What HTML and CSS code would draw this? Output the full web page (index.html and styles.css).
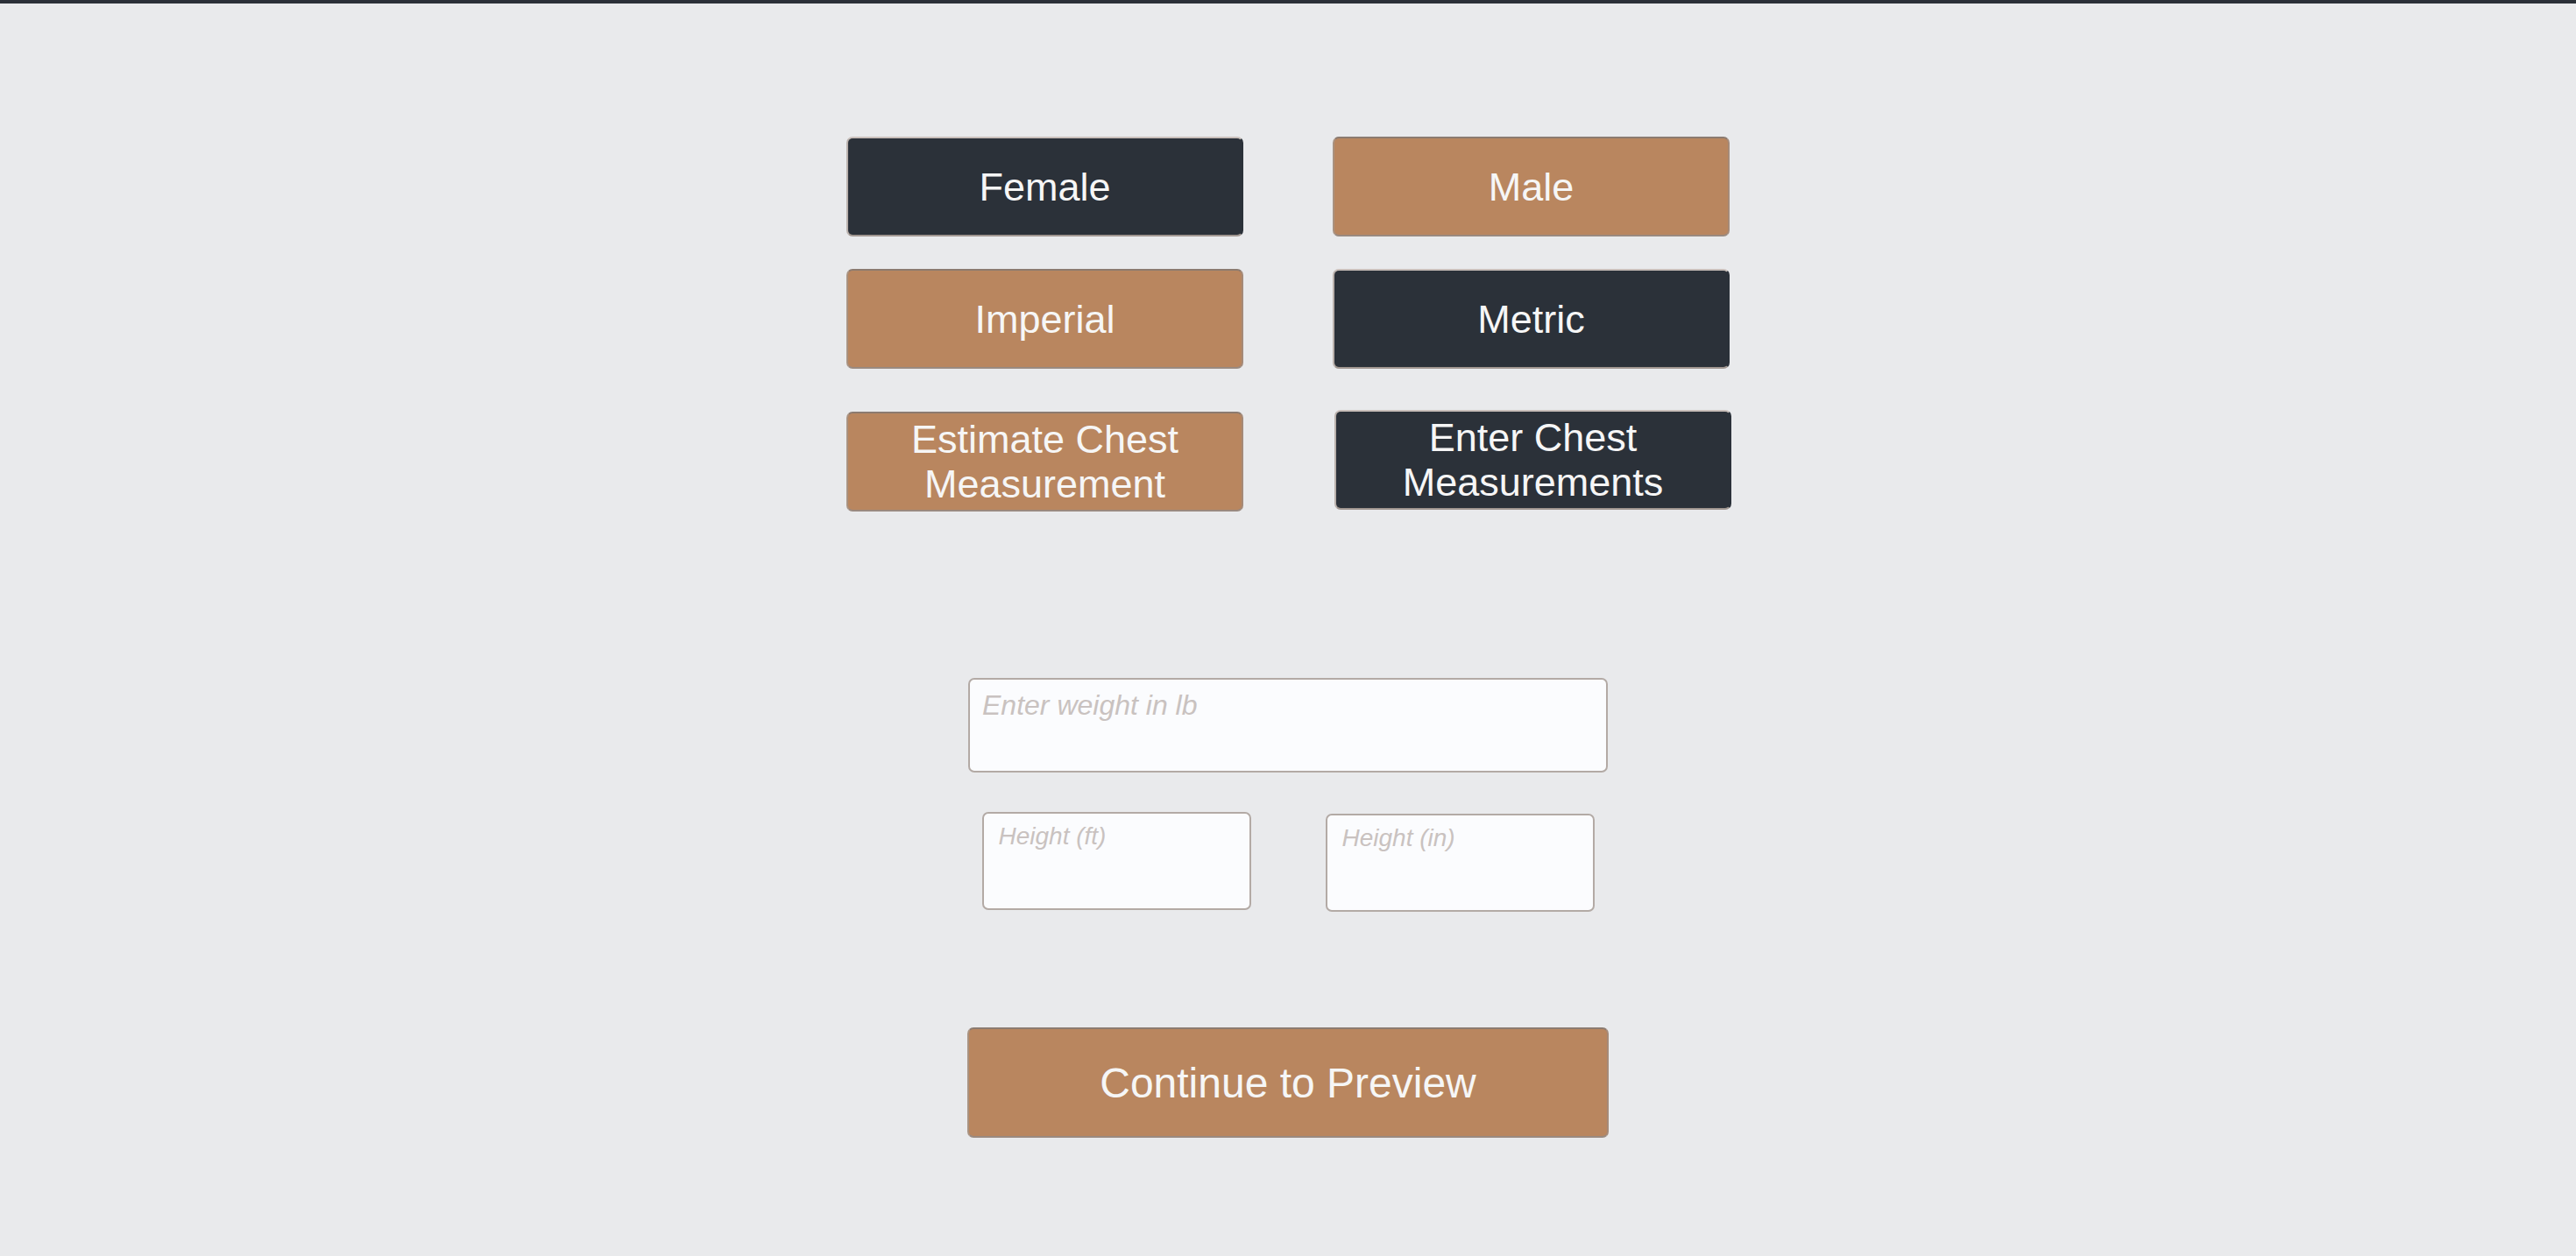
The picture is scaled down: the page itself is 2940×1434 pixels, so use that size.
FILE: index.html
```html
<!DOCTYPE html>
<html lang="en">
<head>
<meta charset="utf-8">
<title>Measurements</title>
<link rel="stylesheet" href="styles.css">
</head>
<body>
<div class="topbar"></div>
<main class="page">
  <div class="choices">
    <button class="btn dark">Female</button>
    <button class="btn tan">Male</button>
    <button class="btn tan">Imperial</button>
    <button class="btn dark">Metric</button>
    <button class="btn tan two">Estimate Chest<br>Measurement</button>
    <button class="btn dark two shifted">Enter Chest<br>Measurements</button>
  </div>
  <div class="fields">
    <input class="field weight" type="text" placeholder="Enter weight in lb">
    <div class="heights">
      <input class="field height" type="text" placeholder="Height (ft)">
      <input class="field height lower" type="text" placeholder="Height (in)">
    </div>
  </div>
  <button class="btn tan continue">Continue to Preview</button>
</main>
</body>
</html>
```

FILE: styles.css
```css
html, body {
  margin: 0;
  padding: 0;
}
body {
  background: #e9eaec;
  font-family: "Liberation Sans", Arial, sans-serif;
  min-height: 1434px;
}
.topbar {
  height: 4px;
  background: #2b3038;
}
.page {
  display: flex;
  flex-direction: column;
  align-items: center;
  padding-top: 152px;
}
.choices {
  display: grid;
  grid-template-columns: 453px 453px;
  column-gap: 102px;
  grid-auto-rows: auto;
  row-gap: 0;
}
.choices .btn:nth-child(3),
.choices .btn:nth-child(4) {
  margin-top: 37px;
}
.choices .btn:nth-child(5),
.choices .btn:nth-child(6) {
  margin-top: 49px;
}
.btn {
  box-sizing: border-box;
  display: flex;
  align-items: center;
  justify-content: center;
  text-align: center;
  font-family: "Liberation Sans", Arial, sans-serif;
  font-size: 45px;
  line-height: 51px;
  color: #f6f6f6;
  border-radius: 7px;
  border: 2px solid transparent;
  padding: 0;
  margin: 0;
  height: 114px;
}
.btn.dark {
  background: #2b3139;
  border-color: #c9bfba #2b3139 #a09690 #b9b0ab;
}
.btn.tan {
  background: #b9865f;
  border-color: #8c7b70 #a58a78 #9a8a80 #a99280;
}
.btn.shifted {
  position: relative;
  left: 2px;
  top: -2px;
}
.fields {
  margin-top: 190px;
  display: flex;
  flex-direction: column;
  align-items: center;
}
.field {
  box-sizing: border-box;
  background: #fbfcfe;
  border: 2px solid #b3aaa5;
  border-radius: 7px;
  font-family: "Liberation Sans", Arial, sans-serif;
  font-style: italic;
  color: #555;
  outline: none;
  margin: 0;
}
.field::placeholder {
  color: #c9c2c0;
  opacity: 1;
}
.weight {
  width: 730px;
  height: 108px;
  font-size: 32px;
  padding: 12px 14px 58px;
}
.heights {
  display: flex;
  gap: 85px;
  margin-top: 45px;
}
.height {
  width: 307px;
  height: 112px;
  font-size: 28px;
  padding: 10px 17px 66px;
}
.height.lower {
  position: relative;
  top: 2px;
}
.continue {
  width: 732px;
  height: 126px;
  margin-top: 134px;
  font-size: 48px;
  border-color: #7f7068 #a58a78 #9a8a80 #8a7c74;
}
```
